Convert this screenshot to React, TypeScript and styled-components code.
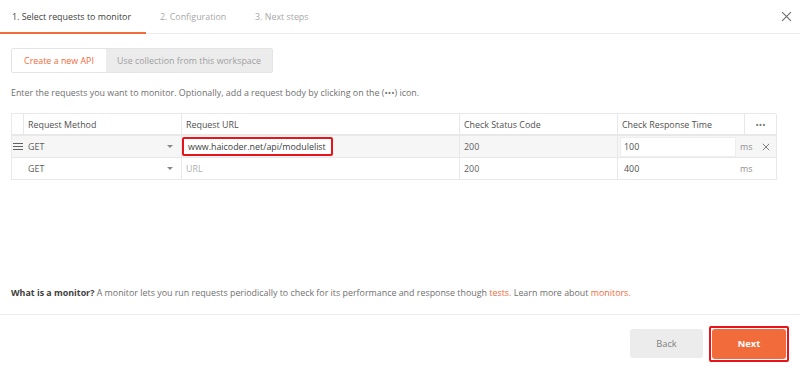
import React from "react";
import styled, { createGlobalStyle } from "styled-components";

const Global = createGlobalStyle`
  html, body { margin: 0; padding: 0; background: #fff; }
  body { font-family: "Open Sans", "Noto Sans", sans-serif; }
  * { box-sizing: border-box; }
`;

const Page = styled.div`
  width: 800px;
  height: 374px;
  display: flex;
  flex-direction: column;
  background: #fff;
  color: #505050;
  font-size: 8.9px;
  white-space: nowrap;
`;

const TabBar = styled.div`
  height: 34px;
  display: flex;
  align-items: stretch;
  border-bottom: 1px solid #ececec;
  padding-right: 6px;
`;

const Tab = styled.div<{ $active?: boolean; $w: number; $pad?: number }>`
  width: ${(p) => p.$w}px;
  display: flex;
  align-items: center;
  padding-left: ${(p) => p.$pad ?? 12}px;
  font-size: 8.9px;
  color: ${(p) => (p.$active ? "#404040" : "#a8a8a8")};
  border-bottom: 2px solid ${(p) => (p.$active ? "#f26b3a" : "transparent")};
  margin-bottom: -1px;
`;

const Spacer = styled.div`
  flex: 1;
`;

const CloseBtn = styled.div`
  width: 16px;
  display: flex;
  align-items: center;
  justify-content: center;
  color: #707070;
`;

const Body = styled.div`
  flex: 1;
  display: flex;
  flex-direction: column;
  padding: 14px 11px 0 11px;
`;

const Segment = styled.div`
  display: flex;
  width: 262px;
  height: 25px;
  border: 1px solid #e4e4e4;
  border-radius: 2px;
  overflow: hidden;
`;

const SegItem = styled.div<{ $active?: boolean }>`
  display: flex;
  align-items: center;
  justify-content: center;
  font-size: 8.9px;
  background: ${(p) => (p.$active ? "#fff" : "#ececec")};
  color: ${(p) => (p.$active ? "#f26b3a" : "#a0a0a0")};
  flex: ${(p) => (p.$active ? "0 0 94px" : "1")};
`;

const Hint = styled.p`
  margin: 14px 0 0 0;
  font-size: 8.9px;
  color: #707070;
  line-height: 12px;
`;

const Table = styled.div`
  margin-top: 14px;
  width: 765px;
  display: grid;
  grid-template-columns: 12px 158px 278px 158px 127px 32px;
  border-top: 1px solid #e8e8e8;
  border-left: 1px solid #e8e8e8;
`;

const Cell = styled.div<{ $hover?: boolean; $head?: boolean; $muted?: boolean }>`
  height: 22px;
  display: flex;
  align-items: center;
  padding: 0 4px;
  font-size: 8.9px;
  color: ${(p) => (p.$muted ? "#b0b0b0" : p.$head ? "#505050" : "#606060")};
  background: ${(p) => (p.$hover ? "#f6f6f6" : "#fff")};
  border-right: 1px solid #e8e8e8;
  border-bottom: ${(p) => (p.$head ? 2 : 1)}px solid #e8e8e8;
`;

const HandleCell = styled(Cell)`
  padding: 0;
  justify-content: center;
  border-right: none;
`;

const SelectCell = styled(Cell)`
  justify-content: space-between;
  padding-right: 8px;
`;

const Caret = styled.span`
  width: 0;
  height: 0;
  border-left: 3px solid transparent;
  border-right: 3px solid transparent;
  border-top: 3px solid #888;
`;

const UrlBox = styled.div`
  height: 19px;
  width: 151px;
  margin-left: -4px;
  display: flex;
  align-items: center;
  padding-left: 4px;
  border: 2px solid #e8141b;
  border-radius: 2px;
  background: #fff;
  color: #404040;
`;

const TimeCell = styled(Cell)`
  grid-column: span 2;
  padding: 0 6px 0 2px;
  gap: 4px;
`;

const TimeInput = styled.div<{ $plain?: boolean }>`
  flex: 0 0 116px;
  height: 20px;
  display: flex;
  align-items: center;
  padding-left: 3px;
  background: ${(p) => (p.$plain ? "transparent" : "#fff")};
  border: 1px solid ${(p) => (p.$plain ? "transparent" : "#eeeeee")};
  color: #505050;
`;

const Ms = styled.span`
  color: #909090;
  flex: 1;
`;

const MoreCell = styled(Cell)`
  justify-content: center;
  color: #707070;
`;

const Info = styled.p`
  margin: auto 0 0 0;
  font-size: 8.9px;
  color: #707070;
  line-height: 12px;
  padding-bottom: 15px;
  b { color: #404040; }
  a { color: #f26b3a; text-decoration: none; }
`;

const Footer = styled.div`
  height: 60px;
  border-top: 1px solid #ececec;
  display: flex;
  align-items: center;
  justify-content: flex-end;
  padding: 0 11px 2px 0;
  gap: 6px;
`;

const Button = styled.div<{ $primary?: boolean }>`
  width: ${(p) => (p.$primary ? 74 : 73)}px;
  height: ${(p) => (p.$primary ? 30 : 29)}px;
  border-radius: 3px;
  display: flex;
  align-items: center;
  justify-content: center;
  font-size: 9.3px;
  font-weight: ${(p) => (p.$primary ? 700 : 400)};
  background: ${(p) => (p.$primary ? "#f26b3a" : "#ececec")};
  color: ${(p) => (p.$primary ? "#fff" : "#808080")};
`;

const Highlight = styled.div`
  padding: 1px;
  border: 2px solid #e8141b;
  border-radius: 2px;
`;

const Hamburger = () => (
  <svg width="10" height="9" viewBox="0 0 10 9">
    <path d="M0 1.5h10M0 4.5h10M0 7.5h10" stroke="#606060" strokeWidth="1" />
  </svg>
);

const Cross = ({ size, color }: { size: number; color: string }) => (
  <svg width={size} height={size} viewBox="0 0 10 10">
    <path d="M1 1L9 9M9 1L1 9" stroke={color} strokeWidth="1.1" />
  </svg>
);

export default function App() {
  return (
    <>
      <Global />
      <Page>
        <TabBar>
          <Tab $active $w={146}>1. Select requests to monitor</Tab>
          <Tab $w={97} $pad={14}>2. Configuration</Tab>
          <Tab $w={120}>3. Next steps</Tab>
          <Spacer />
          <CloseBtn>
            <Cross size={11} color="#707070" />
          </CloseBtn>
        </TabBar>
        <Body>
          <Segment>
            <SegItem $active>Create a new API</SegItem>
            <SegItem>Use collection from this workspace</SegItem>
          </Segment>
          <Hint>
            Enter the requests you want to monitor. Optionally, add a request body by clicking on the (•••) icon.
          </Hint>
          <Table>
            <Cell $head />
            <Cell $head>Request Method</Cell>
            <Cell $head>Request URL</Cell>
            <Cell $head>Check Status Code</Cell>
            <Cell $head>Check Response Time</Cell>
            <MoreCell $head>•••</MoreCell>

            <HandleCell $hover>
              <Hamburger />
            </HandleCell>
            <SelectCell $hover>
              GET <Caret />
            </SelectCell>
            <Cell $hover>
              <UrlBox>www.haicoder.net/api/modulelist</UrlBox>
            </Cell>
            <Cell $hover>200</Cell>
            <TimeCell $hover>
              <TimeInput>100</TimeInput>
              <Ms>ms</Ms>
              <Cross size={8} color="#707070" />
            </TimeCell>

            <HandleCell />
            <SelectCell>
              GET <Caret />
            </SelectCell>
            <Cell $muted>URL</Cell>
            <Cell>200</Cell>
            <TimeCell>
              <TimeInput $plain>400</TimeInput>
              <Ms>ms</Ms>
            </TimeCell>
          </Table>
          <Info>
            <b>What is a monitor?</b> A monitor lets you run requests periodically to check for its performance and
            response though <a>tests.</a> Learn more about <a>monitors.</a>
          </Info>
        </Body>
        <Footer>
          <Button>Back</Button>
          <Highlight>
            <Button $primary>Next</Button>
          </Highlight>
        </Footer>
      </Page>
    </>
  );
}
